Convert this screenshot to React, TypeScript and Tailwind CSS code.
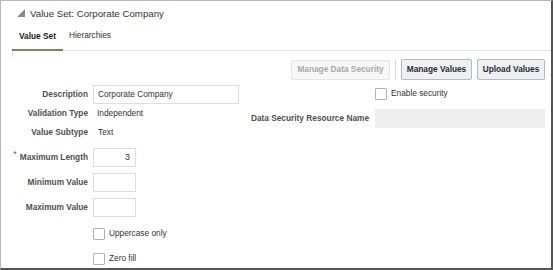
const font = { fontFamily: '"Liberation Sans", Arial, sans-serif' }

const Checkbox = () => (
  <span className="block w-[12px] h-[12px] border border-[#b3b3b3] rounded-[1px] bg-white" />
)

const Label = ({ children, required }: { children: string; required?: boolean }) => (
  <div className="flex items-center justify-end h-[19px] font-bold text-[#4f4f4f] whitespace-nowrap">
    {required && <span className="text-[#c33] text-[9px] mr-[3px] -mt-[6px] font-normal">*</span>}
    {children}
  </div>
)

const SmallInput = ({ value }: { value?: string }) => (
  <div className="w-[43px] h-[19px] border border-[#dedede] bg-white flex items-center justify-end pr-[5px] text-[#333] text-[9px]">
    {value}
  </div>
)

export default function App() {
  return (
    <div
      className="w-[553px] h-[270px] bg-white border-t border-l border-[#b8b8b8] border-r-2 border-b-2 border-r-[#555] border-b-[#555] overflow-hidden text-[8.3px] text-[#333]"
      style={font}
    >
      <div className="flex items-center h-[18px] mt-[4px] pl-[16px]">
        <svg width="9" height="8" viewBox="0 0 9 8" className="mr-[4px] -mt-[2px]">
          <polygon points="8,0 8,8 0,8" fill="#8a8a8a" />
        </svg>
        <span className="text-[9.7px] text-[#333]">Value Set: Corporate Company</span>
      </div>

      <div className="flex items-end mt-[6px] ml-[11px] h-[22px] border-b border-[#dfe4ea]">
        <div className="h-full px-[7px] flex items-start font-bold text-[#222] border-b-2 border-[#6b8c5c] w-[51px] -mb-px">
          Value Set
        </div>
        <div className="h-full pl-[6px] flex items-start text-[#333]">Hierarchies</div>
      </div>
      <div className="ml-[11px] w-px h-[6px] bg-[#dcdcdc]" />

      <div className="flex justify-end items-center gap-[5px] pr-[6px] mt-[2px]">
        <div className="h-[20px] w-[99px] flex items-center justify-center font-bold text-[#a8a8a8] bg-[#f7f7f7] border border-[#e4e4e4] rounded-[2px]">
          Manage Data Security
        </div>
        <div className="w-px h-[21px] bg-[#dadada]" />
        <div className="h-[21px] w-[71px] flex items-center justify-center font-bold text-[#2b2b2b] bg-[#eef1f3] border border-[#b5babf] rounded-[2px]">
          Manage Values
        </div>
        <div className="h-[21px] w-[68px] flex items-center justify-center font-bold text-[#2b2b2b] bg-[#eef1f3] border border-[#b5babf] rounded-[2px]">
          Upload Values
        </div>
      </div>

      <div className="flex justify-between mt-[5px]">
        <div className="grid grid-cols-[87px_auto] gap-x-[5px] content-start">
          <Label>Description</Label>
          <div className="w-[146px] h-[19px] border border-[#dedede] bg-white flex items-center pl-[4px] text-[#333]">
            Corporate Company
          </div>
          <Label>Validation Type</Label>
          <div className="h-[19px] flex items-center pl-[4px]">Independent</div>
          <Label>Value Subtype</Label>
          <div className="h-[19px] flex items-center pl-[5px]">Text</div>

          <div className="col-span-2 h-[6px]" />
          <Label required>Maximum Length</Label>
          <SmallInput value="3" />
          <div className="col-span-2 h-[6px]" />
          <Label>Minimum Value</Label>
          <SmallInput />
          <div className="col-span-2 h-[6px]" />
          <Label>Maximum Value</Label>
          <SmallInput />
          <div className="col-span-2 h-[7px]" />
          <div />
          <div className="h-[19px] flex items-center gap-[4px]">
            <Checkbox />
            <span>Uppercase only</span>
          </div>
          <div className="col-span-2 h-[6px]" />
          <div />
          <div className="h-[19px] flex items-center gap-[4px]">
            <Checkbox />
            <span>Zero fill</span>
          </div>
        </div>

        <div className="grid grid-cols-[auto_170px] gap-x-[6px] content-start pr-[6px]">
          <div />
          <div className="h-[19px] flex items-center gap-[4px] -mt-[1px]">
            <Checkbox />
            <span>Enable security</span>
          </div>
          <div className="col-span-2 h-[6px]" />
          <Label>Data Security Resource Name</Label>
          <div className="h-[19px] bg-[#efefef]" />
        </div>
      </div>
    </div>
  )
}
